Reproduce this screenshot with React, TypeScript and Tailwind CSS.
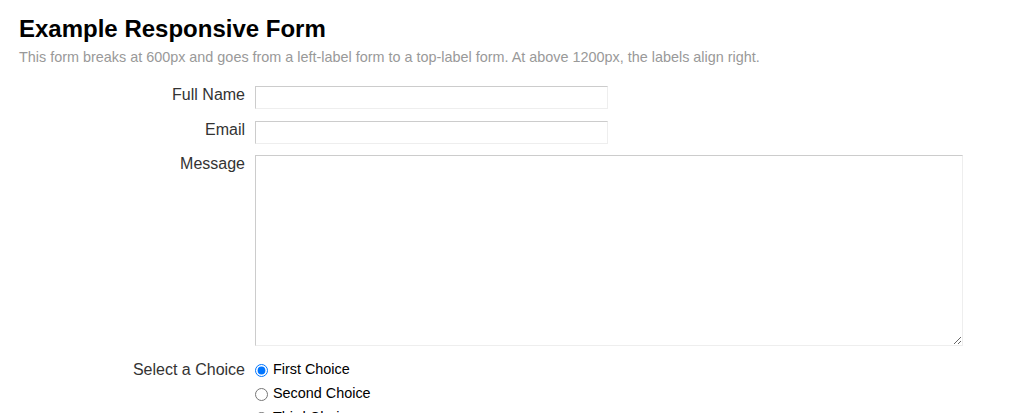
import React from "react";

export default function App() {
  const font = { fontFamily: '"Liberation Sans", Arial, sans-serif' };
  const inputCls =
    "ml-[10px] w-[353px] h-[23px] border border-[#eee] border-t-[#ccc] border-l-[#ccc] outline-none";
  return (
    <div className="bg-white w-[1013px] h-[413px] overflow-hidden pl-[19px] pt-[15px] text-[#333]" style={font}>
      <h1 className="text-[24px] font-bold leading-[28px] text-black">Example Responsive Form</h1>
      <p className="text-[14.4px] leading-[18px] text-[#999] mt-[5px]">
        This form breaks at 600px and goes from a left-label form to a top-label form. At above 1200px, the labels align right.
      </p>
      <form className="mt-[20px] flex flex-col">
        <div className="flex items-start">
          <label className="w-[226px] text-right text-[16px] leading-[18px]">Full Name</label>
          <input type="text" className={inputCls} />
        </div>
        <div className="flex items-start mt-[12px]">
          <label className="w-[226px] text-right text-[16px] leading-[18px]">Email</label>
          <input type="email" className={inputCls} />
        </div>
        <div className="flex items-start mt-[11px]">
          <label className="w-[226px] text-right text-[16px] leading-[18px]">Message</label>
          <textarea className="ml-[10px] w-[708px] h-[191px] border border-[#eee] border-t-[#ccc] border-l-[#ccc] outline-none resize" />
        </div>
        <div className="flex items-start mt-[15px]">
          <label className="w-[226px] text-right text-[16px] leading-[18px]">Select a Choice</label>
          <div className="ml-[10px] flex flex-col text-[14.4px] text-black">
            <label className="flex items-center h-[24px] -mt-[3px]">
              <input type="radio" name="choice" defaultChecked className="w-[13px] h-[13px] m-0 mr-[5px] accent-[#0075ff]" />
              First Choice
            </label>
            <label className="flex items-center h-[24px]">
              <input type="radio" name="choice" className="w-[13px] h-[13px] m-0 mr-[5px]" />
              Second Choice
            </label>
            <label className="flex items-center h-[24px]">
              <input type="radio" name="choice" className="w-[13px] h-[13px] m-0 mr-[5px]" />
              Third Choice
            </label>
          </div>
        </div>
      </form>
    </div>
  );
}
